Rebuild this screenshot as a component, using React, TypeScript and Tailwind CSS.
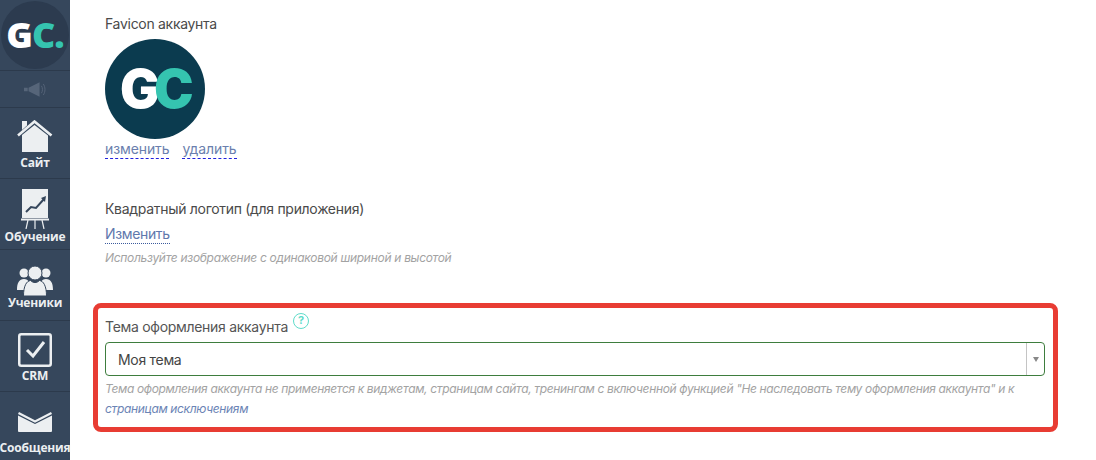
import React from "react";

const ico = "text-[#eceff1]";

function Home() {
  return (
    <svg width="36" height="33" viewBox="0 0 36 33" className={ico}>
      <path d="M5 1h5v4.500l-5 4.500z" fill="currentColor" />
      <path d="M1 15.500 17.500 1.500 34.500 15.500" fill="none" stroke="currentColor" strokeWidth="2.600" />
      <path d="M5 15 17.500 5 31 15.500V32H5z" fill="currentColor" />
    </svg>
  );
}
function Board() {
  return (
    <svg width="28" height="40" viewBox="0 0 28 40" className={ico}>
      <path d="M1 0h26v29H1z" fill="currentColor" />
      <path d="M5 23 10 18l5 1 8-9" fill="none" stroke="#36475c" strokeWidth="2" />
      <path d="m20 9 5-2-1 6z" fill="#36475c" />
      <path d="M0 30.500h28" stroke="currentColor" strokeWidth="2" fill="none" />
      <path d="M7 31l-2 9M14 31v9M21 31l2 9" stroke="currentColor" strokeWidth="1.200" fill="none" />
    </svg>
  );
}
function Users() {
  return (
    <svg width="36" height="30" viewBox="0 0 36 30" className={ico}>
      <circle cx="7" cy="7" r="4.500" fill="currentColor" />
      <circle cx="29" cy="7" r="4.500" fill="currentColor" />
      <path d="M0 24c0-7 2-11 7-11s6 4 6 11zM23 24c0-7 1-11 6-11s7 4 7 11z" fill="currentColor" />
      <circle cx="18" cy="7" r="7" fill="currentColor" stroke="#36475c" strokeWidth="1" />
      <path d="M6.500 30c0-10 3-15 7-15.500 1.500 1.500 3 2 4.500 2s3-.5 4.500-2c4 .5 7 5.500 7 15.500z" fill="currentColor" stroke="#36475c" strokeWidth="1" />
    </svg>
  );
}
function Check() {
  return (
    <svg width="34" height="34" viewBox="0 0 34 34" className={ico}>
      <rect x="1.250" y="1.250" width="31.500" height="31.500" rx="2" fill="none" stroke="currentColor" strokeWidth="2.500" />
      <path d="m9 17 6 6L26 9" fill="none" stroke="currentColor" strokeWidth="3" />
    </svg>
  );
}
function Mail() {
  return (
    <svg width="34" height="20" viewBox="0 0 34 20" className={ico}>
      <path d="M.5 1 17 9.500 33.500 1" fill="none" stroke="currentColor" strokeWidth="2.200" />
      <path d="M0 3.500 17 12 34 3.500V19a1 1 0 0 1-1 1H1a1 1 0 0 1-1-1z" fill="currentColor" />
    </svg>
  );
}

function NavItem({ icon, label, h, border = true, box, gap }: { icon: React.ReactNode; label: string; h: string; border?: boolean; box: string; gap: string }) {
  return (
    <div className={`flex flex-col items-center ${h} ${border ? "border-b border-[#2c3a4c]" : ""}`}>
      <div className={`flex items-end justify-center ${box}`}>{icon}</div>
      <div className={`whitespace-nowrap text-[12px] leading-[14px] font-bold text-[#eceff1] [font-family:'Open_Sans',sans-serif] tracking-[-0.2px] ${gap}`}>{label}</div>
    </div>
  );
}

export default function App() {
  return (
    <div className="flex h-[460px] w-[1096px] overflow-hidden bg-white tracking-[-0.3px] [font-family:Inter,sans-serif]">
      <aside className="w-[70px] shrink-0 bg-[#36475c]">
        <div className="flex h-[71px] items-center justify-center border-b border-[#2c3a4c]">
          <div className="flex h-[68px] w-[68px] items-center justify-center rounded-full bg-[#2c3b4f]">
            <span className="text-[36px] leading-none font-extrabold tracking-[-1px] text-white [font-family:'Open_Sans',sans-serif]">
              G<span className="text-[#35c4b0]">C.</span>
            </span>
          </div>
        </div>
        <div className="flex h-[37px] items-center justify-center border-b border-[#2c3a4c]">
          <svg width="22" height="15" viewBox="0 0 24 16" className="text-[#566579]">
            <path d="M0 6h4v4H0zM5 6l12-6v16L5 10z" fill="currentColor" />
            <path d="M19 4c1.500 2 1.500 6 0 8M21 2c2.500 3 2.500 9 0 12" stroke="currentColor" fill="none" />
          </svg>
        </div>
        <NavItem icon={<Home />} label="Сайт" h="h-[71px]" box="h-[45px]" gap="mt-[3px]" />
        <NavItem icon={<Board />} label="Обучение" h="h-[71px]" box="h-[50px]" gap="mt-[1px]" />
        <NavItem icon={<Users />} label="Ученики" h="h-[71px]" box="h-[46px]" gap="mt-0" />
        <NavItem icon={<Check />} label="CRM" h="h-[71px]" box="h-[46px]" gap="mt-[2px]" />
        <NavItem icon={<Mail />} label="Сообщения" h="h-[69px]" border={false} box="h-[40px]" gap="mt-[9px]" />
      </aside>

      <main className="flex-1 pl-[23px] pr-[38px] text-[14px] text-[#4a4a4a]">
        <div className="pl-[12px] pt-[14px]">
          <div className="leading-[20px]">Favicon аккаунта</div>
          <div className="mt-[5px] h-[100px] w-[100px] rounded-full bg-[#0b3b4f]">
            <svg width="100" height="100" viewBox="0 0 100 100">
              <text x="15" y="68.500" fontFamily="Inter, sans-serif" fontWeight="900" fontSize="53" fill="#fff">G</text>
              <text x="49" y="68.500" fontFamily="Inter, sans-serif" fontWeight="900" fontSize="53" fill="#35c4b0">C</text>
            </svg>
          </div>
          <div className="mt-[1px] flex gap-[13px] leading-[18px] tracking-[-0.1px] text-[#6b7fae]">
            <span className="border-b border-dashed border-[#2222dd]">изменить</span>
            <span className="border-b border-dashed border-[#2222dd]">удалить</span>
          </div>
        </div>

        <div className="mt-[40px] pl-[12px]">
          <div className="leading-[20px]">Квадратный логотип (для приложения)</div>
          <div className="mt-[5px] flex">
            <span className="border-b border-dotted border-[#3b5b9d] leading-[19px] tracking-[-0.35px] text-[#5f78ad]">Изменить</span>
          </div>
          <div className="mt-[5px] text-[12px] leading-[18px] italic text-[#a3a3a3]">Используйте изображение с одинаковой шириной и высотой</div>
        </div>

        <div className="mt-[36px] h-[129px] w-[965px] rounded-[8px] border-[5px] border-[#e83c33] px-[7px] pt-[8px]">
          <div className="flex h-[21px] items-center gap-[5px] text-[#555]">
            <span>Тема оформления аккаунта</span>
            <span className="mb-[12px] flex h-[16px] w-[16px] items-center justify-center rounded-full border-[1.500px] border-[#5fdcca] text-[11px] font-bold tracking-normal text-[#5fdcca]">?</span>
          </div>
          <div className="mt-[5px] flex h-[34px] w-[940px] items-center rounded-[4px] border border-[#3e7d3e] pl-[12px] text-[#444]">
            <span className="flex-1">Моя тема</span>
            <div className="flex h-full w-[18px] items-center justify-center border-l border-[#c4c4c4]">
              <span className="h-0 w-0 border-x-[3px] border-t-[5px] border-x-transparent border-t-[#888]"></span>
            </div>
          </div>
          <div className="mt-[3px] text-[12px] leading-[20px] tracking-[-0.35px] italic text-[#a3a3a3]">
            Тема оформления аккаунта не применяется к виджетам, страницам сайта, тренингам с включенной функцией "Не наследовать тему оформления аккаунта" и к <span className="text-[#6b84b5]">страницам исключениям</span>
          </div>
        </div>
      </main>
    </div>
  );
}
